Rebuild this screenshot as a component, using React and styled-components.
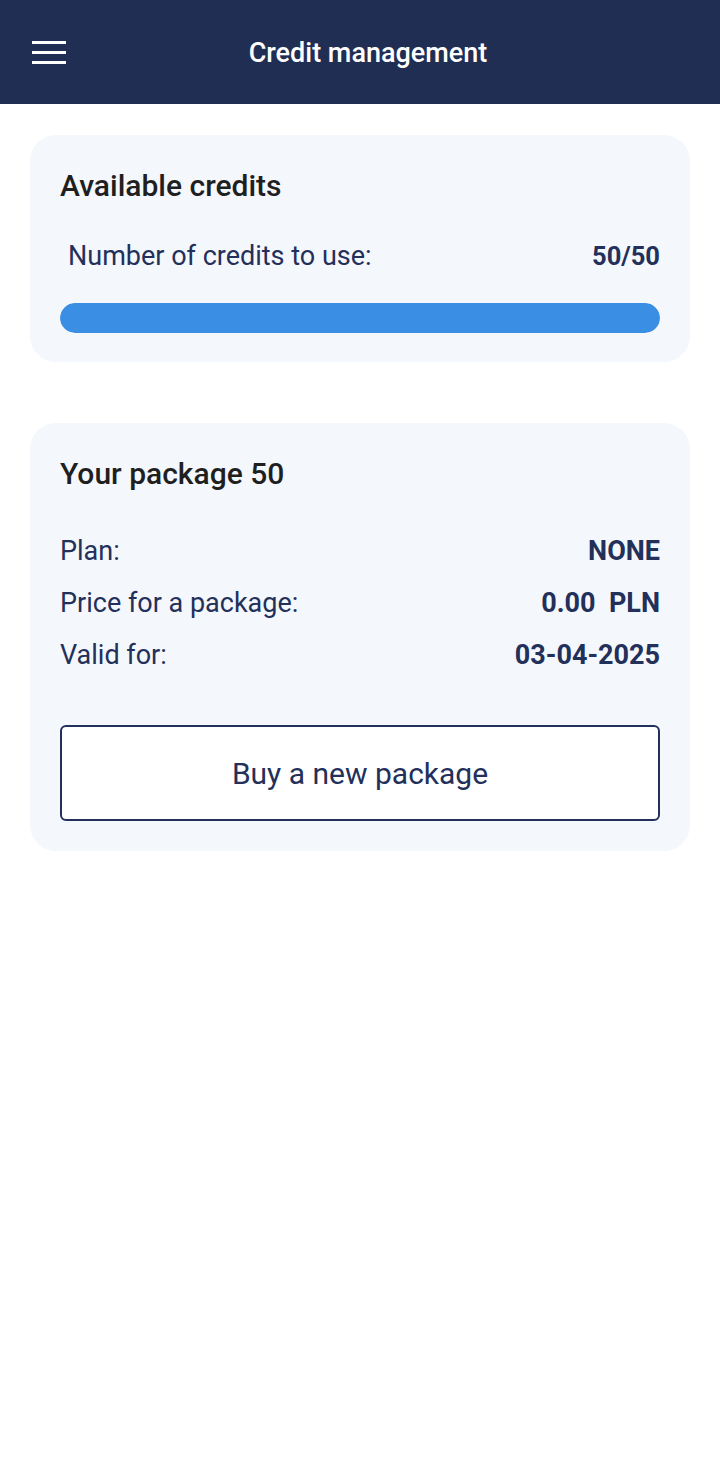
import styled, {createGlobalStyle} from "styled-components";

const GlobalStyle = createGlobalStyle`
  body {
    margin: 0;
    background: #ffffff;
    font-family: Roboto, "Noto Sans", sans-serif;
  }
`;

const details = [
  {label: "Plan:", value: "NONE"},
  {label: "Price for a package:", value: "0.00\u00a0\u00a0PLN"},
  {label: "Valid for:", value: "03-04-2025"},
];

function App() {
  const used = 50;
  const total = 50;
  return (
    <StPage>
      <GlobalStyle />
      <StHeader>
        <StMenuButton aria-label="menu">
          <span />
          <span />
          <span />
        </StMenuButton>
        <StHeaderTitle>Credit management</StHeaderTitle>
      </StHeader>
      <StContent>
        <StCard>
          <StCardTitle>Available credits</StCardTitle>
          <StCreditsRow>
            <StLabel>Number of credits to use:</StLabel>
            <StValue $small>
              {used}/{total}
            </StValue>
          </StCreditsRow>
          <StProgress>
            <StProgressFill style={{width: `${(used / total) * 100}%`}} />
          </StProgress>
        </StCard>
        <StCard>
          <StCardTitle>Your package 50</StCardTitle>
          <StDetails>
            {details.map((d) => (
              <StDetailRow key={d.label}>
                <StLabel>{d.label}</StLabel>
                <StValue>{d.value}</StValue>
              </StDetailRow>
            ))}
          </StDetails>
          <StBuyButton>Buy a new package</StBuyButton>
        </StCard>
      </StContent>
    </StPage>
  );
}
export default App;

const StPage = styled.div`
  min-height: 1465px;
  background: #ffffff;
`;
const StHeader = styled.header`
  position: relative;
  height: 104px;
  background: #212e54;
  display: flex;
  align-items: center;
  justify-content: center;
`;
const StMenuButton = styled.button`
  position: absolute;
  left: 32px;
  top: 41px;
  width: 34px;
  height: 23px;
  padding: 0;
  border: none;
  background: none;
  display: flex;
  flex-direction: column;
  justify-content: space-between;
  span {
    display: block;
    height: 3px;
    background: #ffffff;
  }
`;
const StHeaderTitle = styled.h1`
  margin: 2px 0 0 16px;
  color: #ffffff;
  font-size: 27px;
  font-weight: 500;
`;
const StContent = styled.main`
  display: flex;
  flex-direction: column;
  gap: 61px;
  padding: 31px 30px;
`;
const StCard = styled.section`
  background: #f4f7fc;
  border-radius: 26px;
  padding: 30px 30px 29px;
  display: flex;
  flex-direction: column;
`;
const StCardTitle = styled.h2`
  margin: 0;
  font-size: 30px;
  line-height: 42px;
  font-weight: 500;
  color: #1f1f1f;
`;
const StCreditsRow = styled.div`
  display: flex;
  justify-content: space-between;
  align-items: center;
  padding-left: 8px;
  margin-top: 31px;
`;
const StLabel = styled.span`
  font-size: 27px;
  line-height: 36px;
  color: #22305a;
`;
const StValue = styled.span`
  font-size: ${(p) => (p.$small ? "25.5px" : "27px")};
  line-height: 36px;
  font-weight: 700;
  color: #22305a;
`;
const StProgress = styled.div`
  margin-top: 29px;
  height: 30px;
  border-radius: 15px;
  background: #dbe6f5;
  overflow: hidden;
`;
const StProgressFill = styled.div`
  height: 100%;
  border-radius: 15px;
  background: #3a8ee3;
`;
const StDetails = styled.div`
  margin-top: 38px;
  display: flex;
  flex-direction: column;
  gap: 16px;
`;
const StDetailRow = styled.div`
  display: flex;
  justify-content: space-between;
  align-items: center;
`;
const StBuyButton = styled.button`
  margin-top: 52px;
  margin-bottom: 1px;
  height: 96px;
  border: 2px solid #22305a;
  border-radius: 6px;
  background: #ffffff;
  color: #22305a;
  font-family: Roboto, "Noto Sans", sans-serif;
  font-size: 30px;
  cursor: pointer;
`;
